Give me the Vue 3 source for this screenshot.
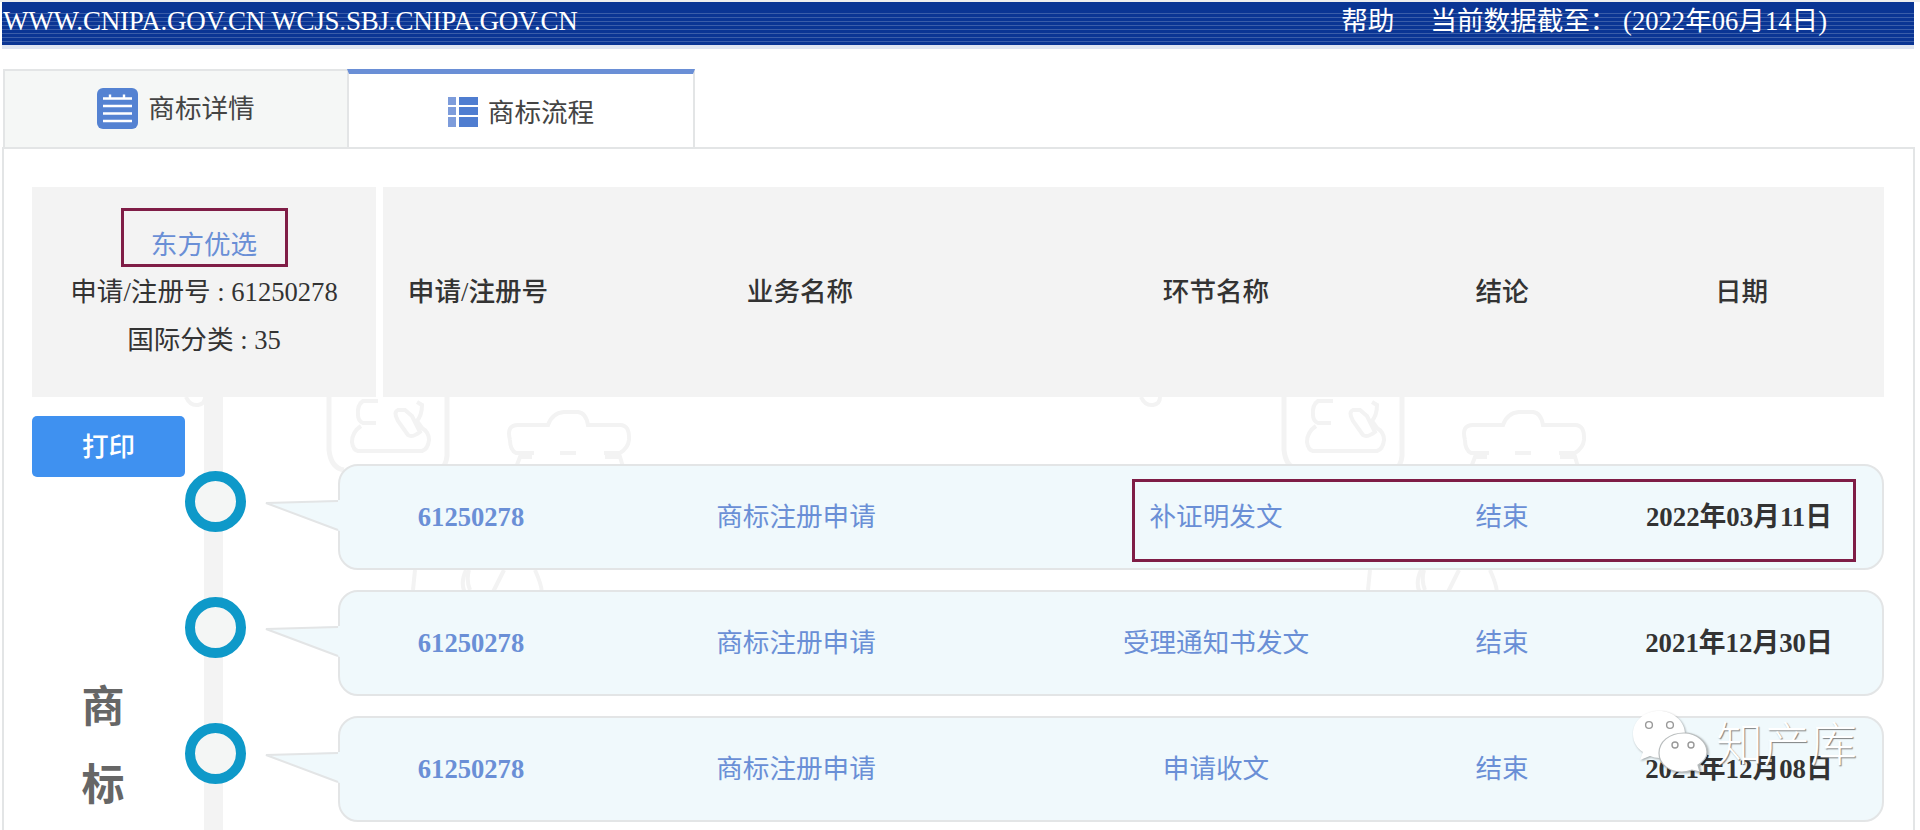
<script setup>
const columns = ['申请/注册号', '业务名称', '环节名称', '结论', '日期']
const rows = [
  { id: '61250278', service: '商标注册申请', step: '补证明发文', result: '结束', date: '2022年03月11日', marked: true },
  { id: '61250278', service: '商标注册申请', step: '受理通知书发文', result: '结束', date: '2021年12月30日', marked: false },
  { id: '61250278', service: '商标注册申请', step: '申请收文', result: '结束', date: '2021年12月08日', marked: false }
]
</script>

<template>
  <div class="page">
    <header class="topbar">
      <span class="site">WWW.CNIPA.GOV.CN WCJS.SBJ.CNIPA.GOV.CN</span>
      <div class="meta">
        <a class="help">帮助</a>
        <span>当前数据截至： (2022年06月14日)</span>
      </div>
    </header>

    <nav class="tabs">
      <div class="tab">
        <svg class="icon-doc" viewBox="0 0 41 41" width="41" height="41">
          <rect x="0" y="0" width="41" height="41" rx="6" fill="#5482d2" />
          <g stroke="#fff" stroke-width="2.6" fill="none">
            <path d="M6 10.5H35M6 18H35M6 25.5H35M6 33H35" />
            <path d="M13 6.5V10M27 6.5V10" stroke-width="2.4" />
          </g>
        </svg>
        <span>商标详情</span>
      </div>
      <div class="tab active">
        <svg class="icon-grid" viewBox="0 0 30 30" width="30" height="30">
          <g fill="#7d9cdb">
            <rect x="0" y="0" width="8" height="8" />
            <rect x="0" y="10" width="8" height="8" />
            <rect x="0" y="20" width="8" height="10" />
          </g>
          <g fill="#4f7dd0">
            <rect x="11" y="0" width="19" height="8" />
            <rect x="11" y="10" width="19" height="8" />
            <rect x="11" y="20" width="19" height="10" />
          </g>
        </svg>
        <span>商标流程</span>
      </div>
    </nav>

    <main class="panel">
      <section class="head-row">
        <div class="info">
          <div class="name-box"><a class="name">东方优选</a></div>
          <p class="info-line">申请/注册号 : 61250278</p>
          <p class="info-line">国际分类 : 35</p>
        </div>
        <div class="columns">
          <span v-for="c in columns" :key="c">{{ c }}</span>
        </div>
      </section>

      <section class="timeline">
        <svg class="watermark" viewBox="0 397 1920 433" width="1920" height="433" fill="none" stroke="#f3f3f3" stroke-width="5">
          <defs>
            <g id="wm">
              <path d="M329 397V450Q331 468 344 470M447 397V456Q446 466 440 470" />
              <path d="M378 401H363Q357 405 358 415Q358 421 363 423H376M361 426Q352 432 352 442Q353 450 358 451H422Q428 449 429 440Q429 432 422 428L417 421Q422 415 422 405L417 402M398 410Q393 412 398 421L408 435Q412 438 420 432L412 416L405 410Z" stroke-width="4" />
              <path d="M510 440Q506 425 518 425H548Q552 413 564 412H578Q586 413 588 425H620Q630 425 629 440Q628 448 620 453H604M534 453H516Q510 450 510 440M560 453H576M515 470L520 457H532M605 457H620L624 470" stroke-width="4" />
              <path d="M487 570Q480 585 488 596M436 570L434 590M556 570Q565 590 562 596M525 570L512 596M490 570Q487 580 491 590" stroke-width="4" transform="translate(-21 0)" />
              <path d="M186 397Q190 406 198 405Q205 404 205 397" stroke-width="4" />
            </g>
          </defs>
          <use href="#wm" />
          <use href="#wm" x="955" />
        </svg>

        <aside class="side">
          <button class="print" type="button">打印</button>
          <div class="vertical">
            <span>商</span>
            <span>标</span>
          </div>
        </aside>

        <div class="track">
          <div class="rail"></div>
          <div v-for="(row, i) in rows" :key="i" class="row">
            <div class="node"></div>
            <article class="card">
              <svg class="tail" viewBox="0 0 75 32" width="75" height="32">
                <path d="M75 0L0 3L75 31Z" fill="#f0f9fc" />
                <path d="M73 1L1 3L73 30" fill="none" stroke="#e3e5e6" stroke-width="2" />
              </svg>
              <a class="cell num">{{ row.id }}</a>
              <a class="cell">{{ row.service }}</a>
              <a class="cell">{{ row.step }}</a>
              <a class="cell">{{ row.result }}</a>
              <span class="cell date">{{ row.date }}</span>
              <div v-if="row.marked" class="mark"></div>
            </article>
          </div>
        </div>
      </section>
    </main>

    <div class="brand">
      <svg viewBox="0 0 76 62" width="76" height="62" class="bubbles">
        <path d="M27 1C12 1 1 11 1 24C1 32 5 38 11 42L8 50L18 46C21 47 24 48 28 48C42 48 53 37 53 24C53 11 41 1 27 1Z" fill="#fff" />
        <path d="M52 23C37 23 27 32 27 43C27 54 37 62 50 62C54 62 57 61 60 60L68 62L66 55C71 52 75 48 75 42C75 32 65 23 52 23Z" fill="#fff" stroke="#b9bdbe" stroke-width="1.2" />
        <circle cx="17" cy="15" r="3.4" fill="#fff" stroke="#999" stroke-width="1.4" />
        <circle cx="38" cy="15" r="3.4" fill="#fff" stroke="#999" stroke-width="1.4" />
        <circle cx="43" cy="35" r="3" fill="#fff" stroke="#999" stroke-width="1.4" />
        <circle cx="59" cy="35" r="3" fill="#fff" stroke="#999" stroke-width="1.4" />
      </svg>
      <span class="brand-name">知产库</span>
    </div>
  </div>
</template>

<style scoped>
.page {
  position: relative;
  height: 830px;
  overflow: hidden;
  padding: 2px 0 0 2px;
  box-sizing: border-box;
  background: #fff;
  color: #333;
  font-family: "Liberation Serif", "Noto Sans CJK SC", serif;
  font-size: 26.6px;
}
.page::before {
  content: "";
  position: absolute;
  inset: 0 0 auto 0;
  height: 2px;
  background: #eeeeee;
}
.topbar {
  width: 1912px;
  height: 47px;
  box-sizing: border-box;
  padding: 0 87px 4px 1px;
  display: flex;
  align-items: center;
  justify-content: space-between;
  color: #fff;
  border-bottom: 4px solid #dfe5f1;
  background:
    linear-gradient(#0a3594 0 9px, transparent 9px),
    repeating-linear-gradient(#0a3594 0 3px, #3a5da9 3px 4px);
  background-clip: padding-box;
}
.site {
  font-size: 27px;
  letter-spacing: -0.2px;
  line-height: 1;
}
.meta {
  display: flex;
  gap: 36px;
  font-size: 26.6px;
  line-height: 1;
}
.tabs {
  display: flex;
  height: 78px;
  margin: 20px 0 0 1px;
}
.tab {
  width: 344px;
  box-sizing: border-box;
  display: flex;
  align-items: center;
  justify-content: center;
  gap: 10px;
  background: #f5f7f6;
  border: 2px solid #e3e5e6;
  border-bottom: none;
  border-right: none;
  color: #444;
  padding-bottom: 2px;
}
.tab span {
  position: relative;
  top: -2px;
}
.tab.active {
  width: 348px;
  background: #fff;
  border-top: 5px solid #6a8fd6;
  border-right: 2px solid #e3e5e6;
  padding-bottom: 0;
  padding-top: 3px;
}
.panel {
  width: 1913px;
  height: 700px;
  box-sizing: border-box;
  border: 2px solid #e3e5e6;
  padding: 38px 0 0 28px;
}
.head-row {
  display: flex;
  gap: 7px;
  height: 210px;
  position: relative;
  z-index: 1;
}
.info {
  width: 344px;
  box-sizing: border-box;
  padding-top: 21px;
  background: #f3f3f3;
  display: flex;
  flex-direction: column;
  align-items: center;
}
.name-box {
  width: 167px;
  height: 59px;
  box-sizing: border-box;
  border: 3px solid #7f1d46;
  padding-top: 16px;
  line-height: 36px;
  text-align: center;
}
.name {
  color: #6a8fd6;
}
.info-line {
  margin: 0;
  line-height: 48px;
  color: #333;
}
.info-line:first-of-type {
  margin-top: 1px;
}
.columns {
  width: 1501px;
  background: #f3f3f3;
  display: grid;
  grid-template-columns: 190px 454px 378px 194px 285px;
  align-items: center;
  justify-items: center;
  font-weight: 500;
  padding-bottom: 6px;
  box-sizing: border-box;
}
.timeline {
  position: relative;
  display: flex;
}
.watermark {
  position: absolute;
  left: -32px;
  top: 0;
}
.side {
  position: relative;
  width: 153px;
  flex: none;
}
.print {
  display: block;
  width: 153px;
  height: 61px;
  margin-top: 19px;
  border: none;
  border-radius: 5px;
  background: #3f91f0;
  color: #fff;
  font: inherit;
  font-weight: 500;
  padding: 0 0 4px;
}
.vertical {
  margin-top: 192px;
  padding-right: 11px;
  display: flex;
  flex-direction: column;
  align-items: center;
  font-size: 43px;
  font-weight: 700;
  line-height: 78px;
  color: #666;
}
.track {
  position: relative;
  padding-top: 67px;
  display: flex;
  flex-direction: column;
  gap: 20px;
}
.rail {
  position: absolute;
  left: 19px;
  top: 0;
  width: 19px;
  height: 500px;
  background: #f3f3f3;
}
.row {
  position: relative;
  display: flex;
  align-items: flex-start;
}
.node {
  width: 61px;
  height: 61px;
  margin-top: 7px;
  box-sizing: border-box;
  border: 10px solid #0e99c9;
  border-radius: 50%;
  background: #f4f6f5;
  flex: none;
}
.card {
  position: relative;
  margin-left: 92px;
  width: 1546px;
  height: 106px;
  box-sizing: border-box;
  border: 2px solid #e3e5e6;
  border-radius: 20px;
  background: #f0f9fc;
  padding-left: 48px;
  display: grid;
  grid-template-columns: 166px 484px 356px 216px 258px;
  align-items: center;
  justify-items: center;
  color: #6a8fd6;
}
.tail {
  position: absolute;
  left: -75px;
  top: 34px;
}
.cell {
  line-height: 36px;
  margin-top: -1px;
}
.num {
  font-weight: 700;
}
.date {
  font-weight: 700;
  font-size: 26.8px;
  color: #333;
}
.mark {
  position: absolute;
  left: 792px;
  top: 13px;
  width: 724px;
  height: 83px;
  box-sizing: border-box;
  border: 3px solid #7f1d46;
}
.brand {
  position: absolute;
  left: 1632px;
  top: 710px;
  display: flex;
  align-items: flex-start;
  gap: 8px;
  color: #fff;
}
.bubbles {
  display: block;
  filter: drop-shadow(1px 1px 1px rgba(0, 0, 0, 0.35));
}
.brand-name {
  font-family: "Noto Sans CJK SC", sans-serif;
  font-size: 47px;
  line-height: 62px;
  font-weight: 300;
  text-shadow: 1px 1px 1px rgba(90, 90, 90, 0.75);
}
</style>

<style>
html, body {
  margin: 0;
  overflow: hidden;
}
</style>
